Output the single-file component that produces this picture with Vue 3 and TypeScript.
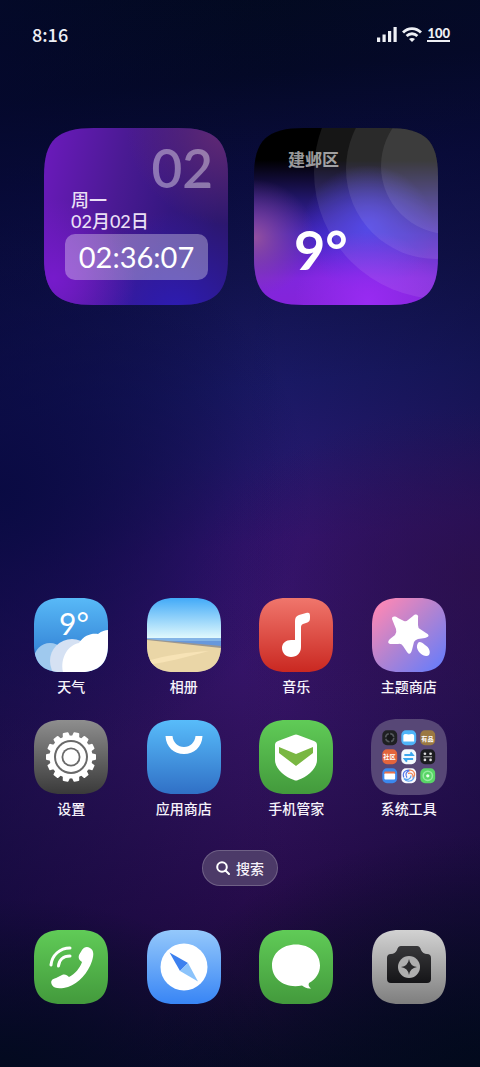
<script setup lang="ts">
interface AppEntry {
  icon: string
  label: string
}

const apps: AppEntry[] = [
  { icon: 'weather', label: '天气' },
  { icon: 'photos', label: '相册' },
  { icon: 'music', label: '音乐' },
  { icon: 'themes', label: '主题商店' },
  { icon: 'settings', label: '设置' },
  { icon: 'market', label: '应用商店' },
  { icon: 'guard', label: '手机管家' },
  { icon: 'folder', label: '系统工具' },
]

const dock: AppEntry[] = [
  { icon: 'phone', label: '电话' },
  { icon: 'browser', label: '浏览器' },
  { icon: 'messages', label: '信息' },
  { icon: 'camera', label: '相机' },
]

const gradients = [
  { id: 'g-weather', from: '#58b9f7', to: '#2a74cc' },
  { id: 'g-market', from: '#58bcfa', to: '#3070c6' },
  { id: 'g-music', from: '#f0766c', to: '#ca2821' },
  { id: 'g-settings', from: '#8e8e8e', to: '#3a3a3a' },
  { id: 'g-green', from: '#60cb57', to: '#439a3c' },
  { id: 'g-browser', from: '#94c8fb', to: '#3885f5' },
  { id: 'g-camera', from: '#d2d2d2', to: '#7e7e7e' },
  { id: 'g-body', from: '#38383a', to: '#141417' },
]

const teeth = Array.from({ length: 14 }, (_, i) => (i * 360) / 14 + 180 / 14)
</script>

<template>
  <div class="screen">
    <svg class="defs" aria-hidden="true">
      <defs>
        <clipPath id="squircle">
          <path d="M27 0H47C65 0 74 9 74 27V47C74 65 65 74 47 74H27C9 74 0 65 0 47V27C0 9 9 0 27 0Z" />
        </clipPath>
        <linearGradient v-for="g in gradients" :id="g.id" :key="g.id" x1="0" y1="0" x2="0" y2="1">
          <stop offset="0" :stop-color="g.from" />
          <stop offset="1" :stop-color="g.to" />
        </linearGradient>
        <linearGradient id="g-sky" x1="0" y1="0" x2="0" y2="1">
          <stop offset="0" stop-color="#42aaf8" />
          <stop offset="1" stop-color="#e4fbfd" />
        </linearGradient>
        <linearGradient id="g-themes" x1="0" y1="0" x2="1" y2="1">
          <stop offset="0.1" stop-color="#f887b7" />
          <stop offset="0.5" stop-color="#b083d2" />
          <stop offset="0.92" stop-color="#6c7df8" />
        </linearGradient>
      </defs>

      <symbol id="weather" viewBox="0 0 74 74">
        <g clip-path="url(#squircle)">
          <rect width="74" height="74" fill="url(#g-weather)" />
          <circle cx="16" cy="61" r="16" fill="#9fc9ee" />
          <circle cx="38" cy="63" r="22" fill="#d5e1f3" />
          <path d="M29 74C26 60 34 47 45 45C50 37 58 35 64 36C68 33 71 32 74 32V74Z" fill="#fff" />
        </g>
      </symbol>

      <symbol id="photos" viewBox="0 0 74 74">
        <g clip-path="url(#squircle)">
          <rect width="74" height="41" fill="url(#g-sky)" />
          <rect y="40" width="74" height="5" fill="#83b4e6" />
          <rect y="43" width="74" height="8" fill="#6798dc" />
          <path d="M0 41L74 48V74H0Z" fill="#9b9790" />
          <path d="M0 42L74 50V74H0Z" fill="#ead6a7" />
          <path d="M0 63C20 57 42 54 62 53C40 59 20 64 0 67Z" fill="#f7e3b6" />
        </g>
      </symbol>

      <symbol id="music" viewBox="0 0 74 74">
        <g clip-path="url(#squircle)">
          <rect width="74" height="74" fill="url(#g-music)" />
          <path d="M36 42V23C36 20 37 18 40 17L47 15C50 14 51 15 51 18V20C51 23 50 24 47 25L44 26C42 27 42 28 42 30V49C42 55 38 59 32 59C27 59 23 55 23 50C23 45 27 42 32 42Z" fill="#fff" />
        </g>
      </symbol>

      <symbol id="themes" viewBox="0 0 74 74">
        <g clip-path="url(#squircle)">
          <rect width="74" height="74" fill="url(#g-themes)" />
          <path d="M20 21C20 18 23 18 26 20L32 23Q34 24 36 22L41 18C44 15 47 17 46 20L46 27Q46 30 48 31L54 35C58 37 57 39 53 40L46 41Q43 42 42 44L40 52C39 56 37 57 35 54L31 48Q29 45 26 46L20 46C16 46 15 44 18 41L23 37Q25 34 24 31Z" fill="#fff" />
          <path d="M46 45C47 43 50 44 53 47C57 49 59 54 57 57C55 59 51 58 48 55C45 52 44 48 46 45Z" fill="#fff" />
        </g>
      </symbol>

      <symbol id="settings" viewBox="0 0 74 74">
        <g clip-path="url(#squircle)">
          <rect width="74" height="74" fill="url(#g-settings)" />
          <path
            v-for="a in teeth"
            :key="a"
            d="M33 18L34 13Q34 12 35 12H39Q40 12 40 13L41 18Z"
            :transform="`rotate(${a} 37 37)`"
            fill="#fff"
          />
          <circle cx="37" cy="37" r="21.500" fill="#fff" />
          <circle cx="37" cy="37" r="17" fill="#696969" />
          <circle cx="37" cy="37" r="15" fill="#fff" />
          <circle cx="37" cy="37" r="9.500" fill="#696969" />
          <circle cx="37" cy="37" r="7.700" fill="#fff" />
        </g>
      </symbol>

      <symbol id="market" viewBox="0 0 74 74">
        <g clip-path="url(#squircle)">
          <rect width="74" height="74" fill="url(#g-market)" />
          <path d="M18.500 16H25.500C26 22.500 31 27 37 27C43 27 48 22.500 48.500 16H55.500C55 27 47 34 37 34C27 34 19 27 18.500 16Z" fill="#fff" />
        </g>
      </symbol>

      <symbol id="guard" viewBox="0 0 74 74">
        <g clip-path="url(#squircle)">
          <rect width="74" height="74" fill="url(#g-green)" />
          <path d="M35 15Q37 14 39 15L55 21Q58 22 58 25V40C58 49 48 57 39 60Q37 61 35 60C26 57 16 49 16 40V25Q16 22 19 21Z" fill="#fff" />
          <path d="M20 27L37 34L54 27V33L37 46L20 33Z" fill="#79b742" />
        </g>
      </symbol>

      <symbol id="folder" viewBox="0 0 74 74">
        <path d="M27 0H47C65 0 74 9 74 27V47C74 65 65 74 47 74H27C9 74 0 65 0 47V27C0 9 9 0 27 0Z" fill="#574776" />
        <rect x="11" y="11" width="14.500" height="14.500" rx="4.500" fill="#1f2023" />
        <circle cx="18.200" cy="18.200" r="4" fill="#17181b" stroke="#55585d" stroke-width="1.500" stroke-dasharray="4.800 1.500" />
        <rect x="29.500" y="11" width="14.500" height="14.500" rx="4.500" fill="#4fb4f8" />
        <path d="M31.500 16Q32 14 36.700 15Q41.500 14 42 16V22H31.500Z" fill="#fff" />
        <rect x="48" y="11" width="14.500" height="14.500" rx="4.500" fill="#9a7842" />
        <rect x="11" y="29.500" width="14.500" height="14.500" rx="4.500" fill="#e3653c" />
        <rect x="29.500" y="29.500" width="14.500" height="14.500" rx="4.500" fill="#f2f8fd" />
        <path d="M32.500 35H40.500L38.500 32.500M41 39H33L35 41.500" fill="none" stroke="#3aa6ee" stroke-width="2" />
        <rect x="48" y="29.500" width="14.500" height="14.500" rx="4.500" fill="#1c1c20" />
        <path d="M51 36.800H59.500" stroke="#bbb" stroke-width="1" />
        <g fill="#ddd">
          <circle cx="52.500" cy="33.800" r="1.300" />
          <circle cx="58" cy="33.800" r="1.300" />
          <circle cx="52.500" cy="39.800" r="1.300" />
          <circle cx="58" cy="39.800" r="1.300" />
        </g>
        <rect x="11" y="48" width="14.500" height="14.500" rx="4.500" fill="#3b88ee" />
        <rect x="13" y="51" width="10.500" height="3" rx="1" fill="#e9744b" />
        <rect x="13" y="53" width="10.500" height="6" rx="1" fill="#fff" />
        <rect x="29.500" y="48" width="14.500" height="14.500" rx="4.500" fill="#fafafe" />
        <g fill="none" stroke-width="1.200">
          <path d="M32 57C30 52 34 49 38 50C34 51 33 54 35 57" stroke="#5377e8" />
          <path d="M37 50C42 49 44 54 41 57C41 53 39 52 36 53" stroke="#ee8a59" />
          <path d="M42 56C41 61 35 62 32 58C36 60 39 58 39 55" stroke="#5ca4ee" />
        </g>
        <rect x="48" y="48" width="14.500" height="14.500" rx="4.500" fill="#58d566" />
        <circle cx="55.300" cy="55.300" r="4.500" fill="none" stroke="#96eba0" stroke-width="1.500" />
        <circle cx="55.300" cy="55.300" r="1.600" fill="#e7ffe9" />
      </symbol>

      <symbol id="phone" viewBox="0 0 74 74">
        <g clip-path="url(#squircle)">
          <rect width="74" height="74" fill="url(#g-green)" />
          <path d="M48 20C50 17 53 16 56 18C60 20 60 25 58 31C54 43 45 53 34 57C27 59 20 59 18 55C16 51 18 49 22 48L28 45C31 44 33 45 35 47C41 44 46 38 48 32C45 30 44 28 45 25Z" fill="#fff" />
          <path d="M17 35C18 25 26 18 36 18M24.500 36C25 30 29 26 36 26" fill="none" stroke="#fff" stroke-width="3" stroke-linecap="round" />
        </g>
      </symbol>

      <symbol id="browser" viewBox="0 0 74 74">
        <g clip-path="url(#squircle)">
          <rect width="74" height="74" fill="url(#g-browser)" />
          <circle cx="37" cy="37" r="23.500" fill="#fff" />
          <path d="M22.500 22.500L41 33L33 41Z" fill="#3c80ef" />
          <path d="M51 51.500L41 33L33 41Z" fill="#8bc3fb" />
        </g>
      </symbol>

      <symbol id="messages" viewBox="0 0 74 74">
        <g clip-path="url(#squircle)">
          <rect width="74" height="74" fill="url(#g-green)" />
          <path d="M37 14.500C51 14.500 61 23.500 61 35.500C61 43 57 49 50 53C49 55 50 57 52 58.500C48 59 45 57 43 55.500C26 59 13 49 13 35.500C13 23.500 23 14.500 37 14.500Z" fill="#fff" />
        </g>
      </symbol>

      <symbol id="camera" viewBox="0 0 74 74">
        <g clip-path="url(#squircle)">
          <rect width="74" height="74" fill="url(#g-camera)" />
          <path d="M19 24Q23 24 25 20Q26 16 29 16H45Q48 16 49 20Q51 24 55 24Q59 24 59 28V49Q59 53 55 53H19Q15 53 15 49V28Q15 24 19 24Z" fill="url(#g-body)" />
          <circle cx="37" cy="37" r="11" fill="#aeaeae" />
          <path d="M37 29Q38 36 45 37Q38 38 37 45Q36 38 29 37Q36 36 37 29Z" fill="#29292b" />
        </g>
      </symbol>
    </svg>

    <header class="status">
      <time>8:16</time>
      <div class="signals">
        <svg class="bars" viewBox="0 0 20 15" aria-hidden="true">
          <path d="M0 10.500h3.200V15H0zM5.500 7.500h3.200V15H5.500zM11 4h3.200v11H11zM16.500 0h3.200v15h-3.200z" fill="#eef0f5" />
        </svg>
        <svg class="wifi" viewBox="0 0 20 15" aria-hidden="true">
          <path d="M1 5.500C6 0.200 14 0.200 19 5.500M4.600 9C7.700 6 12.300 6 15.400 9" fill="none" stroke="#eef0f5" stroke-width="2.800" />
          <path d="M10 15L7 12C8.500 10.500 11.500 10.500 13 12Z" fill="#eef0f5" />
        </svg>
        <span class="battery">100</span>
      </div>
    </header>

    <main>
      <section class="widgets">
        <article class="widget clock">
          <svg class="backdrop" viewBox="0 0 184 177" preserveAspectRatio="none" aria-hidden="true">
            <defs>
              <clipPath id="tile">
                <path d="M50 0H134C171 0 184 12 184 48V129C184 165 171 177 134 177H50C13 177 0 165 0 129V48C0 12 13 0 50 0Z" />
              </clipPath>
              <linearGradient id="clock-base" x1="0" y1="0" x2="1" y2="0.200">
                <stop offset="0" stop-color="#6c1abd" />
                <stop offset="0.450" stop-color="#4a1a93" />
                <stop offset="0.750" stop-color="#341780" />
                <stop offset="1" stop-color="#2c176f" />
              </linearGradient>
              <radialGradient id="clock-rose" cx="1" cy="0" r="0.550">
                <stop offset="0" stop-color="#642a74" />
                <stop offset="1" stop-color="#642a74" stop-opacity="0" />
              </radialGradient>
              <radialGradient id="clock-blue" cx="0.720" cy="1.050" r="0.580">
                <stop offset="0" stop-color="#2d1cb4" />
                <stop offset="1" stop-color="#2d1cb4" stop-opacity="0" />
              </radialGradient>
              <radialGradient id="clock-violet" cx="0.050" cy="0.850" r="0.450">
                <stop offset="0" stop-color="#761bcb" />
                <stop offset="1" stop-color="#761bcb" stop-opacity="0" />
              </radialGradient>
            </defs>
            <g clip-path="url(#tile)">
              <rect width="184" height="177" fill="url(#clock-base)" />
              <rect width="184" height="177" fill="url(#clock-rose)" />
              <rect width="184" height="177" fill="url(#clock-blue)" />
              <rect width="184" height="177" fill="url(#clock-violet)" />
            </g>
          </svg>
          <span class="day">02</span>
          <span class="date">周一<br />02月02日</span>
          <time class="timer">02:36:07</time>
        </article>

        <article class="widget forecast">
          <svg class="backdrop" viewBox="0 0 184 177" preserveAspectRatio="none" aria-hidden="true">
            <defs>
              <linearGradient id="sky-base" x1="0" y1="0" x2="0" y2="1">
                <stop offset="0.180" stop-color="#000" />
                <stop offset="0.400" stop-color="#211669" />
                <stop offset="0.600" stop-color="#4425bd" />
                <stop offset="0.850" stop-color="#8026dd" />
                <stop offset="1" stop-color="#8424da" />
              </linearGradient>
              <radialGradient id="sky-blue" cx="0.620" cy="0.570" r="0.360">
                <stop offset="0" stop-color="#4438e4" />
                <stop offset="1" stop-color="#4438e4" stop-opacity="0" />
              </radialGradient>
              <radialGradient id="sky-pink" cx="0" cy="0.620" r="0.330">
                <stop offset="0" stop-color="#94509f" />
                <stop offset="1" stop-color="#7b3b9c" stop-opacity="0" />
              </radialGradient>
              <radialGradient id="sky-glow" cx="0.620" cy="0.980" r="0.400">
                <stop offset="0" stop-color="#982bf2" />
                <stop offset="1" stop-color="#982bf2" stop-opacity="0" />
              </radialGradient>
            </defs>
            <g clip-path="url(#tile)">
              <rect width="184" height="177" fill="url(#sky-base)" />
              <rect width="184" height="177" fill="url(#sky-blue)" />
              <rect width="184" height="177" fill="url(#sky-pink)" />
              <rect width="184" height="177" fill="url(#sky-glow)" />
              <g fill="#fff" fill-opacity="0.085">
                <circle cx="187" cy="44" r="127" />
                <circle cx="182" cy="41" r="90" />
                <circle cx="195" cy="38" r="68" />
              </g>
            </g>
          </svg>
          <span class="place">建邺区</span>
          <span class="degrees">9°</span>
        </article>
      </section>

      <section class="apps">
        <button v-for="app in apps" :key="app.icon" type="button" class="app">
          <svg class="icon" :class="{ wide: app.icon === 'folder' }" viewBox="0 0 74 74">
            <use :href="`#${app.icon}`" />
            <text v-if="app.icon === 'weather'" class="temp" x="25" y="37">9°</text>
            <g v-if="app.icon === 'folder'" class="mini">
              <text x="55" y="21">有品</text>
              <text x="18" y="39">社区</text>
            </g>
          </svg>
          <span class="label">{{ app.label }}</span>
        </button>
      </section>

      <button type="button" class="search">
        <svg viewBox="0 0 14 14" aria-hidden="true">
          <circle cx="6" cy="6" r="4.800" />
          <path d="M9.500 9.500L13 13" />
        </svg>
        搜索
      </button>
    </main>

    <nav class="dock">
      <button v-for="app in dock" :key="app.icon" type="button" class="app" :aria-label="app.label">
        <svg class="icon" viewBox="0 0 74 74" aria-hidden="true">
          <use :href="`#${app.icon}`" />
        </svg>
      </button>
    </nav>
  </div>
</template>

<style>
body {
  background: #020919;
}
</style>

<style scoped>
.screen {
  box-sizing: border-box;
  display: flex;
  flex-direction: column;
  min-height: 100vh;
  padding-bottom: 64px;
  color: #fff;
  font-family: Lato, 'Noto Sans CJK SC', sans-serif;
  background:
    radial-gradient(ellipse 60% 16% at 100% 54%, rgba(44, 15, 72, 0.7), rgba(44, 15, 72, 0)),
    radial-gradient(ellipse 70% 22% at 100% 100%, rgba(2, 10, 28, 0.95), rgba(2, 10, 28, 0)),
    radial-gradient(ellipse 60% 16% at 0% 100%, rgba(2, 10, 30, 0.95), rgba(2, 10, 30, 0)),
    radial-gradient(ellipse 65% 26% at 0% 46%, rgba(9, 10, 66, 0.95), rgba(9, 10, 66, 0)),
    linear-gradient(90deg, rgba(5, 8, 50, 0.5), rgba(5, 8, 50, 0) 60%),
    linear-gradient(270deg, rgba(6, 9, 44, 0.35), rgba(6, 9, 44, 0) 50%),
    linear-gradient(
      174deg,
      #020a1e 0%,
      #040926 9%,
      #0a0c3e 18%,
      #12134e 27%,
      #1b1a68 37%,
      #251a70 43%,
      #3a157a 51%,
      #3b1577 56%,
      #371468 64%,
      #2f1159 74%,
      #280c4c 83%,
      #1c0b3a 91%,
      #060a22 100%
    );
}

.defs {
  position: absolute;
  width: 0;
  height: 0;
}

.status {
  display: flex;
  justify-content: space-between;
  align-items: center;
  height: 24px;
  padding: 22px 30px 0 32px;
  color: #eef0f5;
  font-size: 18px;
  line-height: 24px;
}

.status > time {
  font-family: 'Noto Sans CJK SC', sans-serif;
  font-weight: 500;
}

.signals {
  display: flex;
  align-items: center;
  gap: 5px;
}

.bars,
.wifi {
  width: 20px;
  height: 15px;
}

.battery {
  border-bottom: 2px solid #eef0f5;
  font-size: 13px;
  font-weight: 900;
  line-height: 13px;
}

.widgets {
  display: grid;
  grid-template-columns: 1fr 1fr;
  gap: 26px;
  padding: 82px 42px 0 44px;
}

.widget {
  position: relative;
  box-sizing: border-box;
  display: flex;
  flex-direction: column;
  min-height: 177px;
}

.widget > span,
.widget > time {
  position: relative;
}

.backdrop {
  position: absolute;
  inset: 0;
  width: 100%;
  height: 100%;
}

.clock {
  padding: 17px 20px 24px 21px;
}

.day {
  align-self: flex-end;
  margin-right: -5px;
  color: rgba(255, 255, 255, 0.4);
  font-size: 53px;
  font-weight: 600;
  line-height: 45px;
}

.date {
  padding-left: 6px;
  color: #e9dff5;
  font-size: 18px;
  font-weight: 500;
  line-height: 21px;
}

.timer {
  margin-top: 2px;
  border-radius: 10px;
  background: rgba(255, 255, 255, 0.32);
  font-size: 29px;
  line-height: 46px;
  text-align: center;
}

.forecast {
  padding: 20px 34px 23px;
}

.place {
  color: rgba(255, 255, 255, 0.62);
  font-size: 17px;
  font-weight: 700;
  line-height: 24px;
}

.degrees {
  margin-top: 46px;
  padding-left: 6px;
  font-size: 54px;
  font-weight: 700;
  line-height: 64px;
}

.apps,
.dock {
  display: grid;
  grid-template-columns: repeat(4, 1fr);
  padding: 0 15px;
}

.apps {
  row-gap: 24px;
  padding-top: 293px;
}

.app {
  display: flex;
  flex-direction: column;
  align-items: center;
  gap: 4px;
  padding: 0;
  border: 0;
  background: none;
  color: #f6f3fb;
  font-family: 'Noto Sans CJK SC', sans-serif;
  font-size: 14px;
  font-weight: 500;
  line-height: 20px;
}

.icon {
  width: 74px;
  height: 74px;
}

.wide {
  width: 76px;
  height: 76px;
  margin: -1px;
}

.temp {
  fill: #fff;
  font-family: Lato, sans-serif;
  font-size: 30px;
  font-weight: 400;
}

.mini {
  fill: #fff;
  font-size: 6px;
  font-weight: 700;
  text-anchor: middle;
}

.search {
  display: flex;
  align-items: center;
  justify-content: center;
  gap: 6px;
  box-sizing: border-box;
  height: 36px;
  margin: 32px auto 0;
  padding: 0 13px;
  border: 1px solid rgba(255, 255, 255, 0.2);
  border-radius: 18px;
  background: #4c3a68;
  color: #f6f2fa;
  font-family: 'Noto Sans CJK SC', sans-serif;
  font-size: 14px;
  font-weight: 500;
  line-height: 20px;
}

.search svg {
  width: 14px;
  height: 14px;
  fill: none;
  stroke: #fff;
  stroke-width: 2;
  stroke-linecap: round;
}

.dock {
  margin-top: auto;
  padding-top: 44px;
}
</style>
